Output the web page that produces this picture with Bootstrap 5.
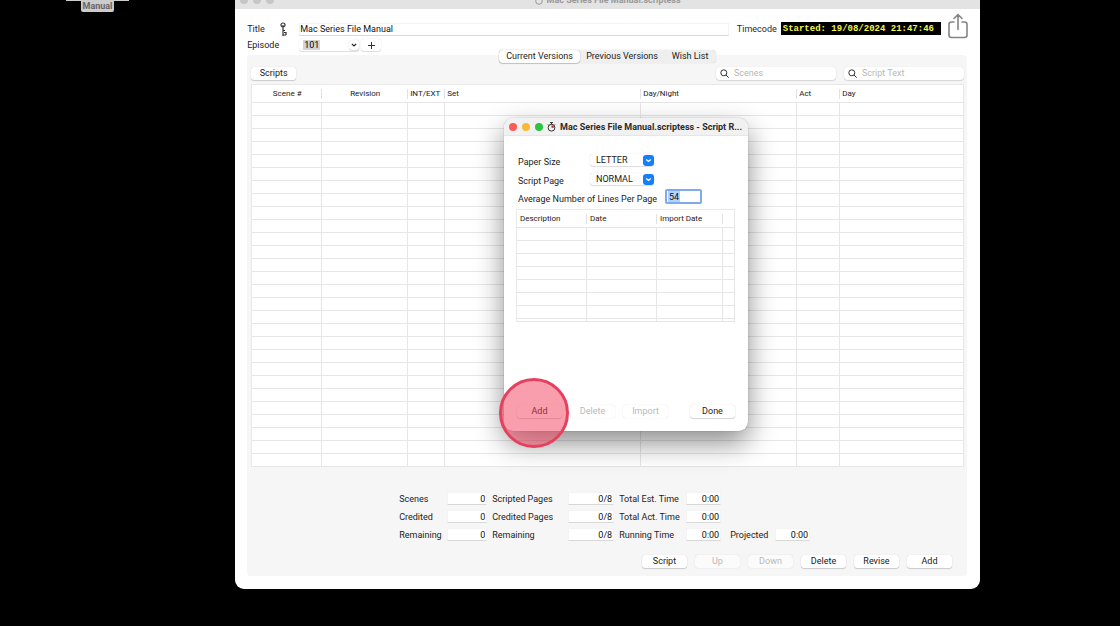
<!DOCTYPE html>
<html lang="en">
<head>
<meta charset="utf-8">
<meta name="viewport" content="width=device-width, initial-scale=1">
<title>Mac Series File Manual.scriptess</title>
<link href="https://cdn.jsdelivr.net/npm/bootstrap@5.3.0/dist/css/bootstrap.min.css" rel="stylesheet">
<style>
body{background:#000;font-family:Roboto,"Liberation Sans",sans-serif;font-size:9px;line-height:12px;color:#2b2b2b;min-height:100vh;overflow:hidden}
label{color:#222}
.desk-item{left:66px;width:63px;top:0;border-top:1px solid #ccc}
.desk-name{background:#ccc;color:#666;font-weight:700;height:11px;line-height:11px;width:33px;border-radius:0 0 2px 2px}
.win{position:absolute;background:#fff;border-radius:9px;overflow:hidden}
.main-win{left:21%;width:66.5%;top:-9px}
.win-bar{height:18px;background:#e3e3e3}
.main-win .win-bar{color:#999}
.dots{gap:5px;left:5px;top:5px}
.dots i{width:8px;height:8px;border-radius:50%;background:#c6c6c6}
.win-title{font-weight:700;line-height:18px;white-space:nowrap}
.field{border:1px solid #f3f3f3;border-bottom-color:#d8d8d8;background:#fff;border-radius:0;height:13px;padding:0 4px;font-size:9px;line-height:11px;color:#111;min-width:0}
.mbtn{font-size:9px;line-height:13px;height:13px;width:45px;padding:0;border:0;border-radius:3px;background:#fff;color:#222;box-shadow:0 0 1px rgba(0,0,0,.2),0 1px 1px rgba(0,0,0,.16)}
.mbtn:disabled{border:0;opacity:1;color:#b9b9b9;background:#fbfbfb;box-shadow:0 0 1px rgba(0,0,0,.2)}
.dlg-acts .mbtn:disabled{background:#fff}
.win-body{padding:12px 13px 13px 12px}
.title-label{width:28px}
.head-row{height:16px}
.ep-label{width:52px}
.combo{width:60px;height:12px;border-radius:3px;box-shadow:0 0 1px rgba(0,0,0,.15),0 1px 1px rgba(0,0,0,.12)}
.combo input{border:0;padding:0 0 0 1px;width:17px;height:10px;margin-left:4px;background:#d4d4d4;font-size:9px;line-height:10px}
.combo button,.plus{border:0;background:#fff;border-radius:3px;box-shadow:0 0 1px rgba(0,0,0,.2),0 1px 1px rgba(0,0,0,.12)}
.combo button{width:10px;height:10px}
.plus{width:20px;height:12px;margin-left:2px}
.timecode{background:#000;color:#f4f450;font:700 9px/14px "Liberation Mono",monospace;height:13px;padding:0 7px 0 2px;white-space:nowrap;margin-top:1px}
.share{background:none;border:0;width:20px;height:26px;margin:-8px -1px 0 7px}
.panel{background:#f6f6f6;border-radius:4px;padding:0 3px 8px 4px;margin-top:2px}
.tabs{background:#efefef;border-radius:4px;height:13px;margin-top:-5px;box-shadow:0 0 1px rgba(0,0,0,.25)}
.tabs button{border:0;border-radius:4px;padding:0;background:none;font-size:9px;line-height:13px;height:13px;color:#222}
.tabs .active{background:#fff;box-shadow:0 0 1px rgba(0,0,0,.3),0 1px 1px rgba(0,0,0,.18)}
.t1{width:81px}.t2{width:84px}.t3{width:52px}
.search{background:#fff;border-radius:4px;height:13px;width:120px;padding-left:4px;gap:5px;box-shadow:0 0 1px rgba(0,0,0,.12),0 1px 1px rgba(0,0,0,.12)}
.search input{border:0;background:none;padding:0;font-size:9px;line-height:13px;height:13px;min-width:0;width:90px}
.search input::placeholder{color:#b8b8b8}
.tools{padding:4px 0}
.sheet{table-layout:fixed;width:100%;margin:0;border-collapse:separate;border-spacing:0;background:#fff;font-size:8px;line-height:10px;border:1px solid #e9e9e9;border-width:1px 0 0 1px;color:#222}
.sheet th{font-weight:400;height:18px;padding:0 2px;background:linear-gradient(#e2e2e2,#e2e2e2) right center/1px 10px no-repeat;border-bottom:1px solid #e6e6e6;white-space:nowrap;vertical-align:middle}
#imports th{padding-left:3px}
.sheet th:last-child{border-right:1px solid #e6e6e6;background:none}
.sheet td{height:13px;padding:0;border:1px solid #e6e6e6;border-width:0 1px 1px 0}
.sheet .last td{height:3px}
.stats{display:grid;grid-template-columns:48px 40px 81px 46px 72px 35px 54px 35px;row-gap:4px;margin:25px 0 0 148px}
.stats label{line-height:14px;padding-left:5px;white-space:nowrap}
.stats label:first-child,.stats .first{padding-left:0}
.stats .last-label{padding-left:9px}
.stats .field{width:100%;text-align:right;padding:0 1px}
.acts{gap:8px;margin-top:13px;padding-right:12px}
.dialog-win{left:45%;top:118px;width:244px;box-shadow:0 0 1px rgba(0,0,0,.5),0 12px 28px rgba(0,0,0,.45)}
.dialog-win .win-bar{background:#f1f1f1;border-bottom:1px solid #e6e6e6}
.dialog-win .dots i:nth-child(1){background:#fb5b57}
.dialog-win .dots i:nth-child(2){background:#f8b935}
.dialog-win .dots i:nth-child(3){background:#29c440}
.dialog-win .win-title{padding-right:6px}
.dlg-body{padding:18px 13px 13px 12px}
.pick{appearance:none;border:0;border-radius:3px;width:64px;height:12px;padding:0 0 0 6px;font-size:9px;line-height:12px;background:#fff;color:#222;box-shadow:0 0 1px rgba(0,0,0,.2),0 1px 1px rgba(0,0,0,.12)}
.pick-arrow{right:0;top:1px;width:11px;height:11px;pointer-events:none}
.opt-rows{gap:5px;margin-bottom:2px}
.opt-label{width:74px;padding:2px 0 0 2px}
.lines-label{width:149px;padding:4px 0 0 2px}
.lines{width:37px;height:15px;border:2px solid #7faaf0;border-radius:2px;padding:0 0 0 2px;font-size:9px;line-height:11px;color:#111;background:linear-gradient(#b3d3fb,#b3d3fb) 1px 0/12px 11px no-repeat #fff;outline:0}
.dlg-acts{margin-top:83px;padding-left:1px}
.tap{position:absolute;left:calc(45% - 5px);top:378px;width:70px;height:70px;border-radius:50%;border:3px solid #e5405e;background:rgba(244,61,91,.5);pointer-events:none}
</style>
</head>
<body>
<div class="desk-item position-absolute d-flex justify-content-center"><div class="desk-name text-center">Manual</div></div>

<main class="win main-win">
  <header class="win-bar position-relative d-flex justify-content-center">
    <div class="dots position-absolute d-flex"><i></i><i></i><i></i></div>
    <div class="win-title d-flex align-items-center gap-1">
      <svg width="8" height="9" viewBox="0 0 8 9" fill="none" stroke="#999"><circle cx="4" cy="5" r="3.300"/><path d="M4 0v2"/></svg>
      <span>Mac Series File Manual.scriptess</span>
    </div>
  </header>
  <div class="win-body">
    <div class="d-flex">
      <div class="flex-grow-1">
        <div class="head-row d-flex align-items-center">
          <label class="title-label" for="title">Title</label>
          <svg class="me-2" width="16" height="15" viewBox="0 0 16 15" fill="none" stroke="#333" stroke-width="1.200"><circle cx="8" cy="3" r="2"/><path d="M8 3v11M8 8.500h2M8 13h3M9 10.500h2v2.500"/></svg>
          <input id="title" class="field flex-grow-1 p-0 me-1" value="Mac Series File Manual">
        </div>
        <div class="head-row d-flex align-items-center">
          <label class="ep-label" for="ep">Episode</label>
          <div class="combo d-flex align-items-center justify-content-between">
            <input id="ep" value="101">
            <button class="d-flex align-items-center justify-content-center p-0" aria-label="Choose episode"><svg width="6" height="4" viewBox="0 0 6 4" fill="none" stroke="#222" stroke-width="1.200"><path d="M.8.8 3 3 5.200.8"/></svg></button>
          </div>
          <button class="plus d-flex align-items-center justify-content-center p-0" aria-label="Add episode"><svg width="7" height="7" viewBox="0 0 7 7" stroke="#333"><path d="M0 3.500h7M3.500 0v7"/></svg></button>
        </div>
      </div>
      <div class="d-flex align-items-start">
        <span class="mx-1 pt-1 lh-1">Timecode</span>
        <output class="timecode">Started: 19/08/2024 21:47:46</output>
      </div>
      <button class="share p-0" aria-label="Share"><svg width="20" height="26" viewBox="0 0 20 26" fill="none" stroke="#858585" stroke-width="1.600" stroke-linecap="round" stroke-linejoin="round"><path d="M6 9H3.500Q1 9 1 11.500V22Q1 24.500 3.500 24.500h13Q19 24.500 19 22V11.500Q19 9 16.500 9H14M10 16.500V1.500M6 5.500l4-4 4 4"/></svg></button>
    </div>

    <section class="panel">
      <div class="d-flex justify-content-center"><div class="tabs d-flex">
        <button class="t1 active">Current Versions</button><button class="t2">Previous Versions</button><button class="t3">Wish List</button>
      </div></div>
      <div class="tools d-flex align-items-center">
        <button class="mbtn me-auto">Scripts</button>
        <div class="search d-flex align-items-center me-2"><svg width="9" height="9" viewBox="0 0 9 9" fill="none" stroke="#333"><circle cx="3.800" cy="3.800" r="3"/><path d="m6 6 2.600 2.600"/></svg><input aria-label="Search scenes" placeholder="Scenes"></div>
        <div class="search d-flex align-items-center"><svg width="9" height="9" viewBox="0 0 9 9" fill="none" stroke="#333"><circle cx="3.800" cy="3.800" r="3"/><path d="m6 6 2.600 2.600"/></svg><input aria-label="Search script text" placeholder="Script Text"></div>
      </div>
      <table class="sheet" id="scenes">
        <colgroup><col style="width:70px"><col style="width:86px"><col style="width:37px"><col style="width:196px"><col style="width:156px"><col style="width:43px"><col></colgroup>
        <thead><tr><th class="text-center">Scene #</th><th class="text-center">Revision</th><th>INT/EXT</th><th>Set</th><th>Day/Night</th><th>Act</th><th>Day</th></tr></thead>
        <tbody></tbody>
      </table>
      <div class="stats">
        <label for="s1">Scenes</label><input id="s1" class="field" value="0">
        <label for="s2">Scripted Pages</label><input id="s2" class="field" value="0/8">
        <label for="s3">Total Est. Time</label><input id="s3" class="field" value="0:00"><span></span><span></span>
        <label class="first" for="s4">Credited</label><input id="s4" class="field" value="0">
        <label for="s5">Credited Pages</label><input id="s5" class="field" value="0/8">
        <label for="s6">Total Act. Time</label><input id="s6" class="field" value="0:00"><span></span><span></span>
        <label class="first" for="s7">Remaining</label><input id="s7" class="field" value="0">
        <label for="s8">Remaining</label><input id="s8" class="field" value="0/8">
        <label for="s9">Running Time</label><input id="s9" class="field" value="0:00">
        <label class="last-label" for="s10">Projected</label><input id="s10" class="field" value="0:00">
      </div>
      <div class="acts d-flex justify-content-end">
        <button class="mbtn">Script</button><button class="mbtn" disabled>Up</button><button class="mbtn" disabled>Down</button><button class="mbtn">Delete</button><button class="mbtn">Revise</button><button class="mbtn">Add</button>
      </div>
    </section>
  </div>
</main>

<section class="win dialog-win" role="dialog" aria-label="Script Revisions">
  <header class="win-bar position-relative">
    <div class="dots position-absolute d-flex"><i></i><i></i><i></i></div>
    <div class="win-title d-flex align-items-center justify-content-end">
      <svg class="me-1" width="9" height="10" viewBox="0 0 9 10" fill="none" stroke="#333"><circle cx="4.500" cy="5.700" r="3.400"/><path d="M4.500 2.500V.5M3 .6h3M1 2.500l1 1M8 2.500l-1 1"/><path d="M4.500 5.700V3.200A2.500 2.500 0 0 1 7 5.700z" fill="#c22" stroke="none"/></svg>
      <span>Mac Series File Manual.scriptess - Script R...</span>
    </div>
  </header>
  <div class="dlg-body">
    <div class="opt-rows d-flex flex-column">
      <div class="d-flex align-items-start">
        <label class="opt-label" for="paper">Paper Size</label>
        <div class="position-relative"><select id="paper" class="pick d-block"><option>LETTER</option></select><svg class="pick-arrow position-absolute" viewBox="0 0 11 11"><rect width="11" height="11" rx="3" fill="#157efb"/><path d="m3.200 4.500 2.300 2 2.300-2" fill="none" stroke="#fff" stroke-width="1.300"/></svg></div>
      </div>
      <div class="d-flex align-items-start">
        <label class="opt-label" for="page">Script Page</label>
        <div class="position-relative"><select id="page" class="pick d-block"><option>NORMAL</option></select><svg class="pick-arrow position-absolute" viewBox="0 0 11 11"><rect width="11" height="11" rx="3" fill="#157efb"/><path d="m3.200 4.500 2.300 2 2.300-2" fill="none" stroke="#fff" stroke-width="1.300"/></svg></div>
      </div>
    </div>
    <div class="d-flex align-items-start mb-1">
      <label for="lines" class="lines-label text-nowrap">Average Number of Lines Per Page</label>
      <input id="lines" class="lines" value="54">
    </div>
    <table class="sheet" id="imports">
      <colgroup><col style="width:70px"><col style="width:70px"><col style="width:66px"><col></colgroup>
      <thead><tr><th>Description</th><th>Date</th><th>Import Date</th><th></th></tr></thead>
      <tbody></tbody>
    </table>
    <div class="dlg-acts d-flex">
      <button class="mbtn me-2">Add</button><button class="mbtn me-2" disabled>Delete</button><button class="mbtn me-auto" disabled>Import</button><button class="mbtn">Done</button>
    </div>
  </div>
</section>
<div class="tap"></div>

<script>
const fill=(id,rows,cols)=>{document.querySelector('#'+id+' tbody').innerHTML=('<tr>'+'<td></td>'.repeat(cols)+'</tr>').repeat(rows)};
fill('scenes',28,7);
fill('imports',7,4);
document.querySelector('#imports tbody').insertAdjacentHTML('beforeend','<tr class="last">'+'<td></td>'.repeat(4)+'</tr>');
</script>
<script src="https://cdn.jsdelivr.net/npm/bootstrap@5.3.0/dist/js/bootstrap.bundle.min.js"></script>
</body>
</html>
